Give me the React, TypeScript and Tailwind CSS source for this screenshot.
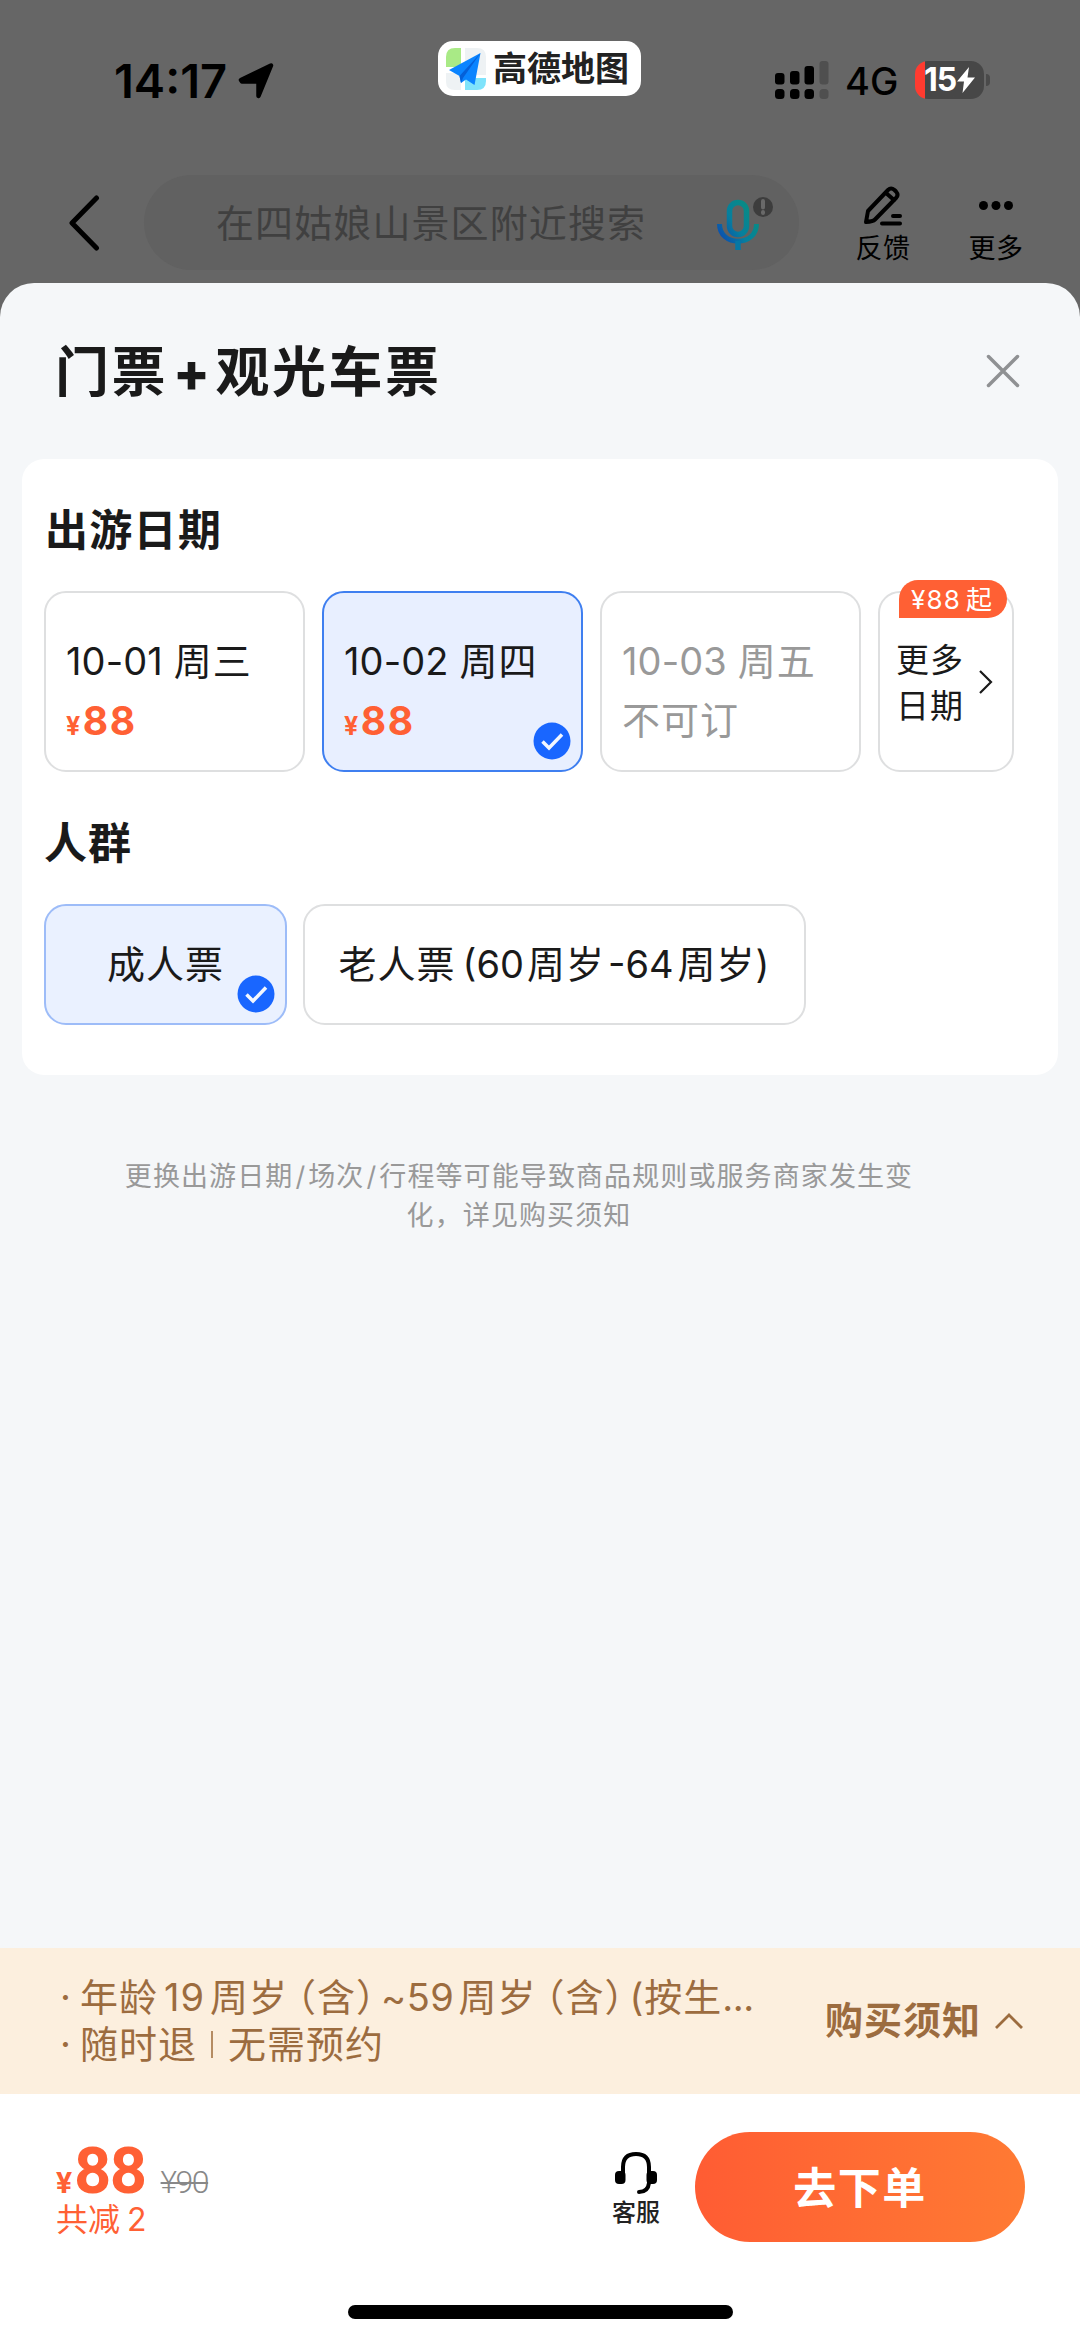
import React, { useState } from 'react';

interface DateOption {
  id: string;
  label: string;
  weekday: string;
  price: number | null;
}

interface TicketType {
  id: string;
  label: React.ReactNode;
  width: string;
}

const dates: DateOption[] = [
  { id: '10-01', label: '10-01', weekday: '周三', price: 88 },
  { id: '10-02', label: '10-02', weekday: '周四', price: 88 },
  { id: '10-03', label: '10-03', weekday: '周五', price: null },
];

const ticketTypes: TicketType[] = [
  { id: 'adult', label: '成人票', width: 'w-[243px]' },
  {
    id: 'senior',
    label: (
      <>
        老人票<span className="ml-[7px] mr-[3px] tracking-normal">(60</span>周岁
        <span className="ml-[3px] mr-[4px] tracking-normal">-64</span>周岁)
      </>
    ),
    width: 'w-[503px]',
  },
];

const CheckBadge: React.FC = () => (
  <svg className="absolute bottom-[10px] right-[10px]" width="38" height="38" viewBox="0 0 38 38" fill="none">
    <circle cx="19" cy="19" r="18.5" fill="#1966ff" />
    <path d="M9.500 19.500L16 26L29 12.500" stroke="#f3f7ff" strokeWidth="3.500" />
  </svg>
);

const StatusBar: React.FC = () => (
  <div className="flex h-[165px] items-start">
    <div className="ml-[114px] mt-[51px] flex w-[324px] items-start">
      <span className="w-[124px] text-[47px] leading-[60px] font-semibold">14:17</span>
      <svg className="mt-[11px]" width="38" height="38" viewBox="0 0 38 38">
        <path d="M3 18L33 3.500L20.500 34V19.500H4Z" fill="#000" stroke="#000" strokeWidth="4.500" strokeLinejoin="round" />
      </svg>
    </div>
    <div className="mt-[41px] flex h-[55px] w-[203px] items-center rounded-[15px] bg-white pl-[8px]">
      <svg width="40" height="42" viewBox="0 0 40 42">
        <path d="M9 0H15V19H0V9Q0 0 9 0Z" fill="#a9ea86" />
        <path d="M19 0H31Q40 0 40 9V27H19Z" fill="#eef2f4" />
        <path d="M0 25H15V42H9Q0 42 0 34Z" fill="#eef2f4" />
        <path d="M19 30H40V33Q40 42 31 42H19Z" fill="#7fe3fb" />
        <path d="M3 22L34.500 5L28.500 37L20 31.500L15 35L13.500 28Z" fill="#0a84ff" />
        <path d="M13.500 28L34.500 5L17 30L15 35Z" fill="#0560d8" />
      </svg>
      <span className="ml-[7px] text-[34px] leading-[40px] font-bold text-[#222]">高德地图</span>
    </div>
    <div className="ml-[134px] mt-[61px] flex h-[38px] items-center">
      <svg width="54" height="38" viewBox="0 0 54 38">
        <rect x="0" y="12" width="9.500" height="11.500" rx="3" />
        <rect x="15" y="10" width="9.500" height="13.500" rx="3" />
        <rect x="29.500" y="5" width="9.500" height="18.500" rx="3" />
        <rect x="44.500" y="0" width="9" height="23.500" rx="3" fill="#4f4f4f" />
        <rect x="0" y="28" width="9.500" height="10" rx="3.500" />
        <rect x="15" y="28" width="9.500" height="10" rx="3.500" />
        <rect x="29.500" y="28" width="9.500" height="10" rx="3.500" />
        <rect x="44.500" y="28" width="9" height="10" rx="3.500" fill="#4f4f4f" />
      </svg>
      <span className="ml-[16px] mt-[2px] w-[70px] text-[38px] leading-[40px] font-medium">4G</span>
      <div className="flex h-[38px] w-[69px] items-center overflow-hidden rounded-[13px] bg-linear-to-r from-[#ff3b30] from-[10.5px] to-[#474747] to-[10.5px] pl-[9px]">
        <span className="text-[32px] leading-[38px] font-bold tracking-[-1px] text-white">15</span>
        <svg className="ml-[1px]" width="18" height="26" viewBox="0 0 18 26">
          <path d="M12 0L0 14.500H7L5.500 26L18 10.500H10.500Z" fill="#fff" />
        </svg>
      </div>
      <div className="ml-[2px] h-[12px] w-[4px] rounded-r-full bg-[#4a4a4a]" />
    </div>
  </div>
);

const SearchHeader: React.FC = () => (
  <div className="flex h-[118px] items-start pl-[69px]">
    <svg className="mt-[30px]" width="31" height="56" viewBox="0 0 31 56" fill="none">
      <path d="M27.500 3L3 28L27.500 53" stroke="#000" strokeWidth="5" strokeLinecap="round" strokeLinejoin="round" />
    </svg>
    <div className="ml-[44px] mt-[10px] flex h-[95px] w-[655px] items-center rounded-full bg-[#616161] pl-[72px]">
      <span className="text-[38px] leading-[50px] tracking-[1.1px] text-[#404040]">在四姑娘山景区附近搜索</span>
      <svg className="ml-[70px]" width="60" height="56" viewBox="0 0 60 56" fill="none">
        <defs>
          <linearGradient id="mic" gradientUnits="userSpaceOnUse" x1="4" y1="42" x2="36" y2="20">
            <stop offset="0" stopColor="#0b4fae" />
            <stop offset="0.5" stopColor="#067f9e" />
            <stop offset="1" stopColor="#088a86" />
          </linearGradient>
        </defs>
        <rect x="13.500" y="7.500" width="17" height="32" rx="8.500" stroke="url(#mic)" strokeWidth="5.500" />
        <path d="M3.500 29C3.500 52 40.500 52 40.500 29" stroke="url(#mic)" strokeWidth="5" />
        <path d="M22 46V55" stroke="#0677a4" strokeWidth="5.500" />
        <circle cx="47" cy="12" r="10" fill="#3d3d3d" />
        <path d="M47 6V12.500M47 17V18" stroke="#696969" strokeWidth="4" strokeLinecap="round" />
      </svg>
    </div>
    <div className="ml-[54px] flex w-[60px] flex-col items-center pt-[21px]">
      <svg width="40" height="40" viewBox="0 0 40 40" fill="none" stroke="#000" strokeWidth="4" strokeLinejoin="round" strokeLinecap="round">
        <path d="M3 36L5 25L25 4Q28 1 31.500 4L33 5.500Q36 9 33 12L12 33.500Q10 35.500 3 36Z" />
        <path d="M23 7L31 14M30 30H37M19 37.500H37" />
      </svg>
      <span className="mt-[6px] text-[27px] leading-[34px] tracking-[0.5px] whitespace-nowrap">反馈</span>
    </div>
    <div className="ml-[53px] flex w-[60px] flex-col items-center pt-[36px]">
      <svg width="34" height="9" viewBox="0 0 34 9">
        <circle cx="4.500" cy="4.500" r="4.500" />
        <circle cx="17" cy="4.500" r="4.500" />
        <circle cx="29.500" cy="4.500" r="4.500" />
      </svg>
      <span className="mt-[22px] text-[27px] leading-[34px] tracking-[0.5px] whitespace-nowrap">更多</span>
    </div>
  </div>
);

const App: React.FC = () => {
  const [selectedDate, setSelectedDate] = useState('10-02');
  const [selectedType, setSelectedType] = useState('adult');

  return (
    <div className="flex h-[2341px] w-[1080px] flex-col overflow-hidden bg-[#666] font-[Inter,'Noto_Sans_CJK_SC',sans-serif] text-black">
      <StatusBar />
      <SearchHeader />

      <div className="flex flex-1 flex-col rounded-t-[34px] bg-[#f5f7f9] text-[#1a1a1a]">
        {/* Title */}
        <div className="flex h-[176px] items-start justify-between pl-[55px] pr-[60px]">
          <h1 className="mt-[52px] text-[54px] leading-[76px] font-bold tracking-[2.5px]">
            门票<span className="ml-[5px] mr-[3px] font-extrabold">+</span>观光车票
          </h1>
          <button className="mt-[71px]" aria-label="关闭">
            <svg width="34" height="34" viewBox="0 0 34 34" fill="none">
              <path d="M2.500 2.500L31.500 31.500M31.500 2.500L2.500 31.500" stroke="#8f9193" strokeWidth="3.500" strokeLinecap="round" />
            </svg>
          </button>
        </div>

        {/* Date and ticket type */}
        <div className="mx-[22px] h-[616px] rounded-[22px] bg-white pl-[22px] pt-[41px]">
          <h2 className="pl-[1px] text-[43px] leading-[60px] font-bold tracking-[1.3px]">出游日期</h2>
          <div className="mt-[31px] flex gap-[17px]">
            {dates.map((date) => {
              const selected = date.id === selectedDate;
              return (
                <button
                  key={date.id}
                  onClick={() => setSelectedDate(date.id)}
                  disabled={date.price === null}
                  className={`relative flex h-[181px] w-[261px] flex-col items-start rounded-[22px] border-2 pl-[20px] pt-[39px] text-[38px] leading-[59px] tracking-[1px] ${
                    selected ? 'border-[#3f7ff0] bg-[#e8efff]' : 'border-[#dedfe0] bg-white'
                  } ${date.price === null ? 'text-[#999]' : ''}`}
                >
                  <span>
                    <span className="tracking-[0.1px]">{date.label}</span>
                    <span className="ml-[11px]">{date.weekday}</span>
                  </span>
                  {date.price === null ? (
                    <span>不可订</span>
                  ) : (
                    <span className="text-[39px] font-bold tracking-[1.5px] text-[#ff6034]">
                      <span className="mr-[1px] text-[25px]">¥</span>
                      {date.price}
                    </span>
                  )}
                  {selected && <CheckBadge />}
                </button>
              );
            })}
            <button className="relative flex h-[181px] w-[136px] items-start rounded-[22px] border-2 border-[#dedfe0] pl-[16px] pt-[44px]">
              <span className="w-[72px] text-left text-[33px] leading-[46px] tracking-[1px]">更多日期</span>
              <svg className="ml-[10px] mt-[32px]" width="16" height="26" viewBox="0 0 16 26" fill="none">
                <path d="M2 2L13 13L2 24" stroke="#1a1a1a" strokeWidth="2.200" />
              </svg>
              <span className="absolute -top-[13px] left-[19px] h-[38px] w-[108px] rounded-[20px] rounded-bl-none bg-[#ff6034] pl-[12px] text-left text-[26px] leading-[39px] tracking-[1.2px] whitespace-nowrap text-white">
                ¥88<span className="ml-[5px]">起</span>
              </span>
            </button>
          </div>

          <h2 className="mt-[41px] text-[43px] leading-[60px] font-bold tracking-[1px]">人群</h2>
          <div className="mt-[31px] flex gap-[16px]">
            {ticketTypes.map((type) => {
              const selected = type.id === selectedType;
              return (
                <button
                  key={type.id}
                  onClick={() => setSelectedType(type.id)}
                  className={`relative flex h-[121px] items-center justify-center rounded-[22px] border-2 text-[38px] tracking-[1px] whitespace-nowrap ${type.width} ${
                    selected ? 'border-[#9dbcf8] bg-[#eaf1ff]' : 'border-[#dedfe0] bg-white'
                  }`}
                >
                  <span>{type.label}</span>
                  {selected && <CheckBadge />}
                </button>
              );
            })}
          </div>
        </div>

        <p className="mt-[82px] w-[1038px] text-center text-[27px] leading-[39px] tracking-[1.1px] text-[#999]">
          更换出游日期<span className="mx-[2px]">/</span>场次<span className="mx-[2px]">/</span>行程等可能导致商品规则或服务商家发生变
          <br />
          化，详见购买须知
        </p>

        {/* Purchase notice */}
        <div className="mt-auto flex h-[146px] items-start bg-[#fcefde] pl-[60px] text-[38px] leading-[47px] tracking-[1px] whitespace-nowrap text-[#9c6c3f]">
          <div className="w-[765px] pt-[26px]">
            <div className="flex [font-feature-settings:'halt']">
              <span className="w-[20px]">·</span>
              年龄<span className="ml-[6px] mr-[5px]">19</span>周岁
              <span className="ml-[9px] mr-[5px]">（含）</span>
              <span className="mr-[4px] tracking-[0.5px]">~59</span>周岁
              <span className="ml-[9px] mr-[5px]">（含）</span>
              (按生<span className="tracking-[-0.5px]">...</span>
            </div>
            <div className="flex items-center">
              <span className="w-[20px]">·</span>
              随时退
              <span className="ml-[14px] mr-[15px] h-[27px] w-[2px] bg-[#b58c63]" />
              无需预约
            </div>
          </div>
          <div className="flex items-center pt-[49px] font-bold">
            购买须知
            <svg className="ml-[13px]" width="30" height="18" viewBox="0 0 30 18" fill="none">
              <path d="M2 16L15 3L28 16" stroke="#9c6c3f" strokeWidth="2.800" />
            </svg>
          </div>
        </div>

        {/* Checkout bar */}
        <div className="flex h-[211px] items-start bg-white pl-[56px]">
          <div className="w-[553px] pt-[49px] text-[#ff6034]">
            <div className="flex h-[56px] items-baseline font-[Roboto,sans-serif] leading-[56px]">
              <span className="w-[18px] text-[30px] font-bold">¥</span>
              <span className="text-[65px] font-bold tracking-[-1.5px]">88</span>
              <span className="ml-[15px] text-[32px] font-light tracking-[-1.5px] text-[#888] line-through decoration-2">¥90</span>
            </div>
            <div className="mt-[3px] text-[32px] leading-[36px]">
              共减<span className="ml-[7px]">2</span>
            </div>
          </div>
          <div className="flex w-[54px] flex-col items-center pt-[57px]">
            <svg width="44" height="44" viewBox="0 0 44 44" fill="none">
              <path d="M9 22V16Q9 3 22 3T35 16V32Q34 41 25 41" stroke="#000" strokeWidth="4" strokeLinecap="round" />
              <rect x="1" y="20" width="10.500" height="13" rx="4" fill="#000" />
              <rect x="32.500" y="20" width="10.500" height="13" rx="4" fill="#000" />
            </svg>
            <span className="mt-[2px] text-[24px] leading-[32px] font-medium whitespace-nowrap text-[#222]">客服</span>
          </div>
          <button className="ml-[32px] mt-[38px] h-[110px] w-[330px] rounded-full bg-linear-to-r from-[#ff5c33] to-[#ff7a33] pt-[2px] text-[43px] font-bold tracking-[1.5px] text-white">
            去下单
          </button>
        </div>
        <div className="flex h-[36px] justify-center bg-white">
          <div className="h-[14px] w-[385px] rounded-full bg-black" />
        </div>
      </div>
    </div>
  );
};

export default App;
